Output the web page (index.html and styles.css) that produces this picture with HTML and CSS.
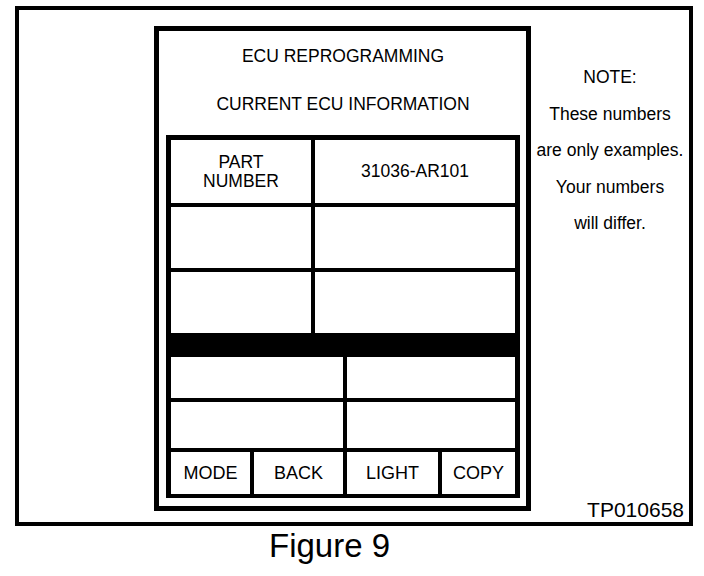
FILE: index.html
```html
<!DOCTYPE html>
<html>

<head>
    <title>Figure 9 - ECU Reprogramming</title>
    <link rel="stylesheet" href="styles.css">
</head>

<body>
    <div class="frame">
        <div class="screen">
            <div class="titles">
                <p>ECU REPROGRAMMING</p>
                <p>CURRENT ECU INFORMATION</p>
            </div>
            <div class="table">
                <div class="info">
                    <div class="cell label">PART<br>NUMBER</div>
                    <div class="cell">31036-AR101</div>
                    <div class="cell"></div>
                    <div class="cell"></div>
                    <div class="cell"></div>
                    <div class="cell"></div>
                </div>
                <div class="lower">
                    <div class="cell"></div>
                    <div class="cell"></div>
                    <div class="cell"></div>
                    <div class="cell"></div>
                </div>
                <div class="buttons">
                    <div class="cell">MODE</div>
                    <div class="cell">BACK</div>
                    <div class="cell">LIGHT</div>
                    <div class="cell">COPY</div>
                </div>
            </div>
        </div>
        <div class="side">
            <p class="note">NOTE:<br>These numbers<br>are only examples.<br>Your numbers<br>will differ.</p>
            <p class="code">TP010658</p>
        </div>
    </div>
    <p class="caption">Figure 9</p>
</body>

</html>
```
FILE: styles.css
```css
body {
    margin: 0;
    background: #fff;
    color: #000;
    font-family: "Liberation Sans", Arial, sans-serif;
    font-size: 17.5px;
}

p {
    margin: 0;
}

.frame {
    display: flex;
    width: 678px;
    height: 520px;
    margin: 6px 0 0 15px;
    border: 4px solid #000;
    box-sizing: border-box;
}

.screen {
    width: 377px;
    margin: 16px 0 11px 135px;
    padding: 1px 6px 8px 7px;
    border: 5px solid #000;
    box-sizing: border-box;
}

.titles {
    margin-bottom: 7px;
    text-align: center;
    line-height: 48px;
}

.table {
    background: #000;
    border: 5px solid #000;
    border-bottom-width: 4px;
}

.cell {
    display: flex;
    align-items: center;
    justify-content: center;
    background: #fff;
    text-align: center;
}

.label {
    line-height: 19px;
}

.info {
    display: grid;
    grid-template-columns: 140px 1fr;
    grid-template-rows: 63px 61px 61px;
    gap: 4px;
}

.lower {
    display: grid;
    grid-template-columns: 172px 1fr;
    grid-template-rows: 41px 46px;
    gap: 4px;
    margin-top: 24px;
}

.buttons {
    display: grid;
    grid-template-columns: 79px 89px 91px 1fr;
    grid-template-rows: 42px;
    gap: 4px;
    margin-top: 4px;
    font-size: 18px;
}

.side {
    flex: 1;
    display: flex;
    flex-direction: column;
}

.note {
    padding-top: 49px;
    text-align: center;
    line-height: 36.5px;
}

.code {
    margin-top: auto;
    padding-right: 5px;
    text-align: right;
    font-size: 21px;
    line-height: 24px;
}

.caption {
    margin-top: 1px;
    padding-left: 269px;
    font-size: 33px;
    line-height: 38px;
}
```
